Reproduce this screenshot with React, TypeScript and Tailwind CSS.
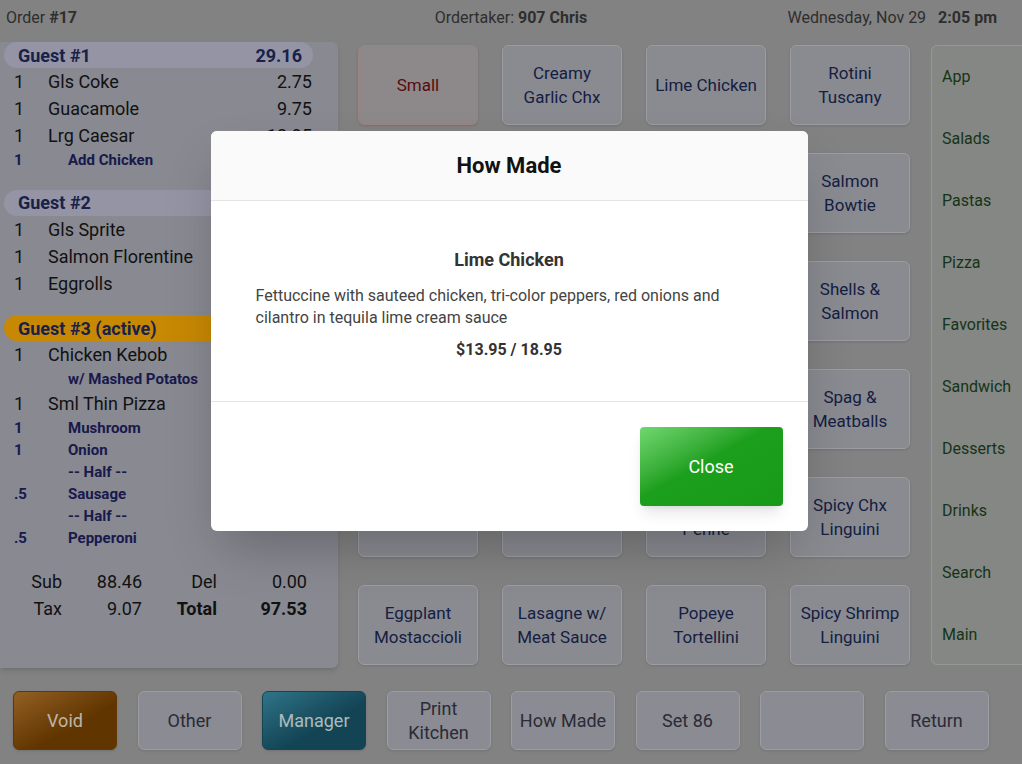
import React from 'react';

type Line = { qty: string; name: string; price?: string; sub?: boolean };

interface Guest {
  label: string;
  total?: string;
  active?: boolean;
  lines: Line[];
}

const guests: Guest[] = [
  {
    label: 'Guest #1',
    total: '29.16',
    lines: [
      { qty: '1', name: 'Gls Coke', price: '2.75' },
      { qty: '1', name: 'Guacamole', price: '9.75' },
      { qty: '1', name: 'Lrg Caesar', price: '12.95' },
      { qty: '1', name: 'Add Chicken', price: '3.71', sub: true },
    ],
  },
  {
    label: 'Guest #2',
    total: '31.52',
    lines: [
      { qty: '1', name: 'Gls Sprite', price: '2.75' },
      { qty: '1', name: 'Salmon Florentine', price: '19.95' },
      { qty: '1', name: 'Eggrolls', price: '8.82' },
    ],
  },
  {
    label: 'Guest #3 (active)',
    active: true,
    lines: [
      { qty: '1', name: 'Chicken Kebob', price: '16.95' },
      { qty: '', name: 'w/ Mashed Potatos', sub: true },
      { qty: '1', name: 'Sml Thin Pizza', price: '8.95' },
      { qty: '1', name: 'Mushroom', price: '0.98', sub: true },
      { qty: '1', name: 'Onion', price: '0.98', sub: true },
      { qty: '', name: '-- Half --', sub: true },
      { qty: '.5', name: 'Sausage', price: '0.98', sub: true },
      { qty: '', name: '-- Half --', sub: true },
      { qty: '.5', name: 'Pepperoni', price: '0.98', sub: true },
    ],
  },
];

const menuItems = [
  'Small', 'Creamy\nGarlic Chx', 'Lime Chicken', 'Rotini\nTuscany',
  'Fettuccine\nAlfredo', 'Chicken\nMarsala', 'Chicken\nParmesan', 'Salmon\nBowtie',
  'Baked Ziti', 'Shrimp\nScampi', 'Pasta\nPrimavera', 'Shells &\nSalmon',
  'Ravioli', 'Carbonara', 'Tortellini\nAlfredo', 'Spag &\nMeatballs',
  'Baked Penne', 'Cheese Ravioli', 'Cajun Chx\nPenne', 'Spicy Chx\nLinguini',
  'Eggplant\nMostaccioli', 'Lasagne w/\nMeat Sauce', 'Popeye\nTortellini', 'Spicy Shrimp\nLinguini',
];

const categories = ['App', 'Salads', 'Pastas', 'Pizza', 'Favorites', 'Sandwich', 'Desserts', 'Drinks', 'Search', 'Main'];

const actions = ['Void', 'Other', 'Manager', 'Print\nKitchen', 'How Made', 'Set 86', '', 'Return'];

function GuestBlock({ guest }: { guest: Guest }) {
  return (
    <div className="mb-[18.5px]">
      <div
        className={`flex h-[26px] items-center justify-between rounded-full pl-[14px] pr-[11px] text-[18px] font-bold text-[#1f2a5c] ${
          guest.active ? 'bg-[#f9aa06]' : 'bg-[#babace]'
        }`}
      >
        <span>{guest.label}</span>
        {guest.total && !guest.active && <span>{guest.total}</span>}
      </div>
      {guest.lines.map((line, i) =>
        line.sub ? (
          <div key={i} className="flex h-[22px] items-center text-[15px] font-bold text-[#1e2160]">
            <span className="w-[64px] shrink-0 pl-[10px]">{line.qty}</span>
            <span className="flex-1">{line.name}</span>
          </div>
        ) : (
          <div key={i} className="flex h-[27px] items-center text-[18px] text-[#161616]">
            <span className="w-[44px] shrink-0 pl-[10px]">{line.qty}</span>
            <span className="flex-1">{line.name}</span>
            <span className="pr-[1px]">{line.price}</span>
          </div>
        )
      )}
    </div>
  );
}

export default function App() {
  return (
    <div
      className="relative h-[764px] w-[1022px] overflow-hidden bg-[#a3a3a3]"
      style={{ fontFamily: 'Roboto, "Liberation Sans", sans-serif' }}
    >
      {/* Top bar */}
      <div className="grid h-[36px] grid-cols-[1fr_auto_1fr] items-center text-[16px] text-[#3a3a3a]">
        <div className="pl-[6px]">
          Order <span className="font-bold">#17</span>
        </div>
        <div>
          Ordertaker: <span className="font-bold">907 Chris</span>
        </div>
        <div className="flex justify-end gap-[12px] pr-[25px]">
          <span>Wednesday, Nov 29</span>
          <span className="font-bold">2:05 pm</span>
        </div>
      </div>

      {/* Main */}
      <div className="mt-[6px] flex">
        <div className="h-[626px] w-[338px] shrink-0 rounded-r-md bg-[#aaacb6] pl-[4px] shadow-md">
          <div className="w-[309px]">
            {guests.map((g) => (
              <GuestBlock key={g.label} guest={g} />
            ))}
            <div className="mt-[4px] grid grid-cols-[58px_80px_75px_90px] text-right text-[18px] leading-[27px] text-[#161616]">
              <span>Sub</span>
              <span>88.46</span>
              <span>Del</span>
              <span>0.00</span>
              <span>Tax</span>
              <span>9.07</span>
              <span className="font-bold">Total</span>
              <span className="font-bold">97.53</span>
            </div>
          </div>
        </div>

        <div className="ml-[20px] mt-[3px] grid shrink-0 grid-cols-[repeat(4,120px)] grid-rows-[repeat(6,80px)] gap-x-[24px] gap-y-[28px]">
          {menuItems.map((item, i) => (
            <div
              key={i}
              className={`flex items-center justify-center whitespace-pre-line rounded-md border text-center text-[17px] leading-[24px] shadow-sm ${
                i === 0
                  ? 'border-[#c6a2a3] bg-[#b1aaad] text-[#6e1010]'
                  : 'border-[#c3c3cb] bg-[#acaeb6] text-[#1a2752]'
              }`}
            >
              {item}
            </div>
          ))}
        </div>

        <div className="ml-[21px] mt-[3px] h-[620px] w-[100px] shrink-0 rounded-l-md border border-[#bcbfbc] bg-[#a6a9a6]">
          {categories.map((c) => (
            <div key={c} className="flex h-[62px] items-center pl-[10px] text-[16px] text-[#1b421d]">
              {c}
            </div>
          ))}
        </div>
      </div>

      {/* Bottom bar */}
      <div className="mt-[23px] flex gap-[20.5px] pl-[13px]">
        {actions.map((a, i) => (
          <div
            key={i}
            className={`flex h-[59px] w-[104px] shrink-0 items-center justify-center whitespace-pre-line rounded-md border text-center text-[18px] leading-[24px] shadow-sm ${
              a === 'Void'
                ? 'border-[#7d4500] bg-gradient-to-br from-[#b8792c] to-[#7a4300] to-60% text-[#ece0d2]'
                : a === 'Manager'
                ? 'border-[#19576a] bg-gradient-to-br from-[#3c92ac] to-[#18566a] to-60% text-[#dbe8ea]'
                : 'border-[#c3c3cc] bg-[#adaeb8] text-[#363644]'
            }`}
          >
            {a}
          </div>
        ))}
      </div>

      {/* Modal */}
      <div className="absolute inset-0 flex justify-center bg-black/20 pr-[4px] pt-[131px]">
        <div className="h-[400px] w-[597px] overflow-hidden rounded-md bg-white shadow-2xl">
          <div className="flex h-[70px] items-center justify-center border-b border-[#e4e4e4] bg-[#fafafa] text-[22px] font-bold text-[#111]">
            How Made
          </div>
          <div className="h-[201px] border-b border-[#e4e4e4] px-[45px] pt-[47px] text-[#333]">
            <div className="text-center text-[18px] font-bold leading-[24px]">Lime Chicken</div>
            <p className="mt-[13px] text-[16px] leading-[22px] text-[#444]">
              Fettuccine with sauteed chicken, tri-color peppers, red onions and cilantro in tequila lime cream sauce
            </p>
            <div className="mt-[10px] text-center text-[16px] font-bold leading-[22px]">$13.95 / 18.95</div>
          </div>
          <div className="flex justify-end pr-[25px] pt-[25px]">
            <button className="h-[79px] w-[143px] rounded-sm bg-gradient-to-br from-[#6fd86f] via-[#1c9f1c] via-45% to-[#189a18] text-[18px] text-white shadow-lg">
              Close
            </button>
          </div>
        </div>
      </div>
    </div>
  );
}
